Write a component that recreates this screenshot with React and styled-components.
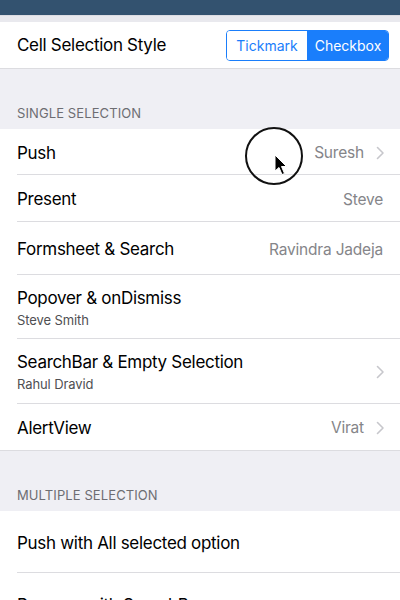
import React from 'react';
import styled, { createGlobalStyle } from 'styled-components';

const GlobalStyle = createGlobalStyle`
  html, body {
    margin: 0;
    padding: 0;
    background: #efeff4;
    font-family: Inter, "Liberation Sans", sans-serif;
    -webkit-font-smoothing: antialiased;
  }
`;

const single = [
  { title: 'Push', detail: 'Suresh', chevron: true, height: 46 },
  { title: 'Present', detail: 'Steve', height: 47 },
  { title: 'Formsheet & Search', detail: 'Ravindra Jadeja', height: 53 },
  { title: 'Popover & onDismiss', subtitle: 'Steve Smith', height: 64 },
  { title: 'SearchBar & Empty Selection', subtitle: 'Rahul Dravid', chevron: true, height: 65 },
  { title: 'AlertView', detail: 'Virat', chevron: true, height: 46 },
];

const multiple = [
  { title: 'Push with All selected option', height: 62 },
  { title: 'Popover with SearchBar', height: 62 },
];

const Chevron = () => (
  <svg width="9" height="14" viewBox="0 0 9 14">
    <path d="M1.5 1.5 L7 7 L1.5 12.5" fill="none" stroke="#c7c7cc" strokeWidth="1.6" strokeLinecap="round" strokeLinejoin="round" />
  </svg>
);

const Cursor = () => (
  <svg width="14" height="22" viewBox="0 0 14 22">
    <path d="M1 1 L1 17 L5 13.5 L8 20.5 L10.5 19.5 L7.5 12.5 L12.5 12.5 Z" fill="#000" stroke="#fff" strokeWidth="1" strokeLinejoin="round" />
  </svg>
);

const App = () => {
  const renderRow = (row, i, count) => (
    <Row key={row.title} height={row.height} last={i === count - 1}>
      <Texts>
        <Title>{row.title}</Title>
        {row.subtitle && <Subtitle>{row.subtitle}</Subtitle>}
      </Texts>
      {row.detail && <Detail>{row.detail}</Detail>}
      {row.chevron && <ChevronBox><Chevron /></ChevronBox>}
    </Row>
  );

  return (
    <Page>
      <GlobalStyle />
      <NavBar />
      <TopGap />
      <StyleRow>
        <Title>Cell Selection Style</Title>
        <Segmented>
          <Segment>Tickmark</Segment>
          <Segment active>Checkbox</Segment>
        </Segmented>
      </StyleRow>

      <SectionHeader>SINGLE SELECTION</SectionHeader>
      <Group closed>
        {single.map((r, i) => renderRow(r, i, single.length))}
        <Touch>
          <Cursor />
        </Touch>
      </Group>

      <SectionHeader>MULTIPLE SELECTION</SectionHeader>
      <Group>
        {multiple.map((r, i) => renderRow(r, i, multiple.length + 1))}
      </Group>
    </Page>
  );
};

const Page = styled.div`
  width: 400px;
  height: 600px;
  overflow: hidden;
  background: #efeff4;
`;

const NavBar = styled.div`
  height: 15px;
  background: #33526f;
`;

const TopGap = styled.div`
  height: 7px;
  background: #e9e9ee;
  border-top: 1px solid #dcdce2;
  box-sizing: border-box;
`;

const StyleRow = styled.div`
  height: 46px;
  background: #fff;
  border-bottom: 1px solid #dcdce0;
  display: flex;
  align-items: center;
  justify-content: space-between;
  padding: 0 11px 0 17px;
`;

const Segmented = styled.div`
  display: flex;
  height: 31px;
  border: 1px solid #1a7efb;
  border-radius: 4px;
  overflow: hidden;
  box-sizing: border-box;
  margin-top: 1px;
`;

const Segment = styled.div`
  width: 80px;
  display: flex;
  align-items: center;
  justify-content: center;
  font-size: 14px;
  color: ${(p) => (p.active ? '#fff' : '#1a7efb')};
  background: ${(p) => (p.active ? '#1a7efb' : '#fff')};
  & + & {
    border-left: 1px solid #1a7efb;
  }
`;

const SectionHeader = styled.div`
  height: 60px;
  box-sizing: border-box;
  display: flex;
  align-items: flex-end;
  padding: 0 17px 8px;
  font-size: 13px;
  color: #6d6d72;
  letter-spacing: 0.1px;
`;

const Group = styled.div`
  position: relative;
  background: #fff;
  border-bottom: ${(p) => (p.closed ? '1px solid #dcdce0' : 'none')};
`;

const Row = styled.div`
  height: ${(p) => p.height}px;
  box-sizing: border-box;
  display: flex;
  align-items: center;
  padding: 1px 17px 0 17px;
  background: ${(p) =>
    p.last ? '#fff' : 'linear-gradient(to bottom, #fff calc(100% - 1px), #dcdce0 calc(100% - 1px)) no-repeat 17px 0 / calc(100% - 17px) 100%'};
`;

const Texts = styled.div`
  flex: 1;
  display: flex;
  flex-direction: column;
  gap: 4px;
`;

const Title = styled.div`
  font-size: 17px;
  color: #000;
  letter-spacing: -0.3px;
`;

const Subtitle = styled.div`
  font-size: 13px;
  color: #4f4f52;
  letter-spacing: -0.1px;
`;

const Detail = styled.div`
  font-size: 15.5px;
  color: #858589;
  letter-spacing: -0.2px;
`;

const ChevronBox = styled.div`
  display: flex;
  margin-left: 12px;
  margin-right: -2px;
`;

const Touch = styled.div`
  position: absolute;
  left: 245px;
  top: -2px;
  width: 58px;
  height: 58px;
  border: 2px solid #111;
  border-radius: 50%;
  box-sizing: border-box;
  & > svg {
    position: absolute;
    left: 27px;
    top: 25px;
  }
`;

export default App;
